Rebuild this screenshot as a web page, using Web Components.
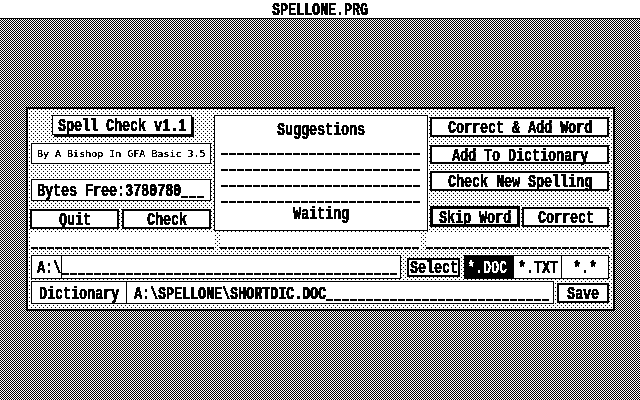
<!DOCTYPE html>
<html>
<head>
<meta charset="utf-8">
<title>SPELLONE.PRG</title>
<style>
html,body{margin:0;padding:0;background:#fff;}
/* makes every glyph 1-bit, like the ST high res screen */
body{width:640px;height:400px;overflow:hidden;filter:brightness(.72) contrast(100);}
</style>
</head>
<body>
<st-desktop title="SPELLONE.PRG">
  <st-window>
    <div class="col-left" slot="left">
      <st-btn kind="shadow" style="width:140px;height:20px;margin-left:22px"><st-text>Spell Check v1.1</st-text></st-btn>
      <st-box style="width:180px;height:21px;margin:8px 0 0 1px"><st-text small>By A Bishop In GFA Basic 3.5</st-text></st-box>
      <st-box style="width:180px;height:22px;margin:15px 0 0 1px"><st-text>Bytes Free:3780780</st-text><st-text blank>___</st-text></st-box>
      <st-row style="margin-top:8px;gap:3px">
        <st-btn style="width:89px;height:20px"><st-text>Quit</st-text></st-btn>
        <st-btn style="width:89px;height:20px"><st-text>Check</st-text></st-btn>
      </st-row>
    </div>
    <st-suggest slot="middle">
      <st-text blank>_________________________</st-text>
      <st-text blank>_________________________</st-text>
      <st-text blank>_________________________</st-text>
      <st-text blank>_________________________</st-text>
    </st-suggest>
    <div class="col-right" slot="right">
      <st-btn style="width:179px;height:20px;margin-top:2px"><st-text>Correct &amp; Add Word</st-text></st-btn>
      <st-btn style="width:179px;height:19px;margin-top:8px"><st-text>Add To Dictionary</st-text></st-btn>
      <st-btn style="width:179px;height:20px;margin-top:7px"><st-text>Check New Spelling</st-text></st-btn>
      <st-row style="margin-top:15px;gap:2px;align-items:center">
        <st-btn kind="default" style="width:90px;height:21px"><st-text>Skip Word</st-text></st-btn>
        <st-btn style="width:87px;height:20px"><st-text>Correct</st-text></st-btn>
      </st-row>
    </div>
    <st-field slot="fields" style="width:184px"><st-text blank>_______________________</st-text></st-field>
    <st-field slot="fields" style="width:200px;margin-left:5px"><st-text blank>_________________________</st-text></st-field>
    <st-field slot="fields" style="width:184px;margin-left:6px"><st-text blank>_______________________</st-text></st-field>

    <st-row slot="path" style="align-items:center">
      <st-box align="left" style="width:370px;height:24px;padding-left:5px"><st-text>A:\</st-text><st-cursor><st-text blank>__________________________________________</st-text></st-cursor></st-box>
      <st-btn style="width:53px;height:19px;margin-left:6px"><st-text>Select</st-text></st-btn>
      <st-row style="margin-left:4px">
        <st-box kind="selected" style="width:50px;height:24px;padding-right:4px"><st-text>*.DOC</st-text></st-box>
        <st-box kind="plain" style="width:47px;height:24px"><st-text>*.TXT</st-text></st-box>
        <st-box style="width:48px;height:24px"><st-text>*.*</st-text></st-box>
      </st-row>
    </st-row>
    <st-row slot="dict" style="align-items:center;margin-top:2px">
      <st-box style="width:96px;height:23px"><st-text>Dictionary</st-text></st-box>
      <st-box align="left" style="width:428px;height:23px;margin-left:-1px;padding-left:7px"><st-text>A:\SPELLONE\SHORTDIC.DOC</st-text><st-text blank>____________________________</st-text></st-box>
      <st-btn style="width:52px;height:20px;margin-left:3px"><st-text>Save</st-text></st-btn>
    </st-row>
  </st-window>
</st-desktop>

<script>
const DOTS = "url(\"data:image/svg+xml,%3Csvg xmlns='http://www.w3.org/2000/svg' width='4' height='4' shape-rendering='crispEdges'%3E%3Crect width='4' height='4' fill='%23fff'/%3E%3Crect x='1' y='0' width='1' height='1'/%3E%3Crect x='3' y='2' width='1' height='1'/%3E%3C/svg%3E\")";

class StDesktop extends HTMLElement{
    connectedCallback(){
        this.attachShadow({mode:"open"}).innerHTML=`
        <style>
        :host{display:block;width:640px;height:400px;background:#fff;color:#000;}
        header{height:18px;box-sizing:border-box;padding-top:1px;display:flex;justify-content:center;}
        main{height:382px;box-sizing:border-box;border-top:1px solid #000;background:repeating-conic-gradient(#000 0 25%,#fff 0 50%) 0 0/2px 2px;padding:88px 0 0 26px;}
        </style>
        <header><st-text>${this.getAttribute("title")}</st-text></header>
        <main><slot></slot></main>`;
        this.removeAttribute("title");
    }
}

class StWindow extends HTMLElement{
    connectedCallback(){
        this.attachShadow({mode:"open"}).innerHTML=`
        <style>
        :host{display:block;width:589px;height:204px;box-sizing:border-box;border:2px solid #000;background:${DOTS};padding:6px 0 0 2px;}
        .top{display:flex;height:116px;}
        .left{width:184px;}
        .right{margin-left:2px;}
        .fields{display:flex;height:16px;margin:2px 0 0 1px;}
        .path{margin:6px 0 0 1px;}
        ::slotted(.col-left),::slotted(.col-right){display:block;}
        </style>
        <div class="top">
            <div class="left"><slot name="left"></slot></div>
            <slot name="middle"></slot>
            <div class="right"><slot name="right"></slot></div>
        </div>
        <div class="fields"><slot name="fields"></slot></div>
        <div class="path"><slot name="path"></slot><slot name="dict"></slot></div>`;
    }
}

class StRow extends HTMLElement{
    connectedCallback(){
        this.attachShadow({mode:"open"}).innerHTML=`<style>:host{display:flex;}</style><slot></slot>`;
    }
}

class StBtn extends HTMLElement{
    connectedCallback(){
        this.attachShadow({mode:"open"}).innerHTML=`
        <style>
        :host{display:flex;align-items:center;justify-content:center;box-sizing:border-box;border:2px solid #000;background:#fff;}
        :host([kind=shadow]){border-width:1px;box-shadow:2px 2px 0 #000;}
        :host([kind=default]){border-width:3px;}
        </style>
        <slot></slot>`;
    }
}

class StBox extends HTMLElement{
    connectedCallback(){
        this.attachShadow({mode:"open"}).innerHTML=`
        <style>
        :host{display:flex;align-items:center;justify-content:center;box-sizing:border-box;border:1px solid #000;background:#fff;flex:none;}
        :host([align=left]){justify-content:flex-start;}
        :host([kind=selected]){background:#000;color:#fff;}
        :host([kind=plain]){border-left:0;border-right:0;}
        </style>
        <slot></slot>`;
    }
}

class StCursor extends HTMLElement{
    connectedCallback(){
        this.attachShadow({mode:"open"}).innerHTML=`
        <style>:host{display:flex;align-items:center;align-self:stretch;border-left:1px solid #000;}</style>
        <slot></slot>`;
    }
}

class StField extends HTMLElement{
    connectedCallback(){
        this.attachShadow({mode:"open"}).innerHTML=`
        <style>:host{display:block;height:16px;background:#fff;flex:none;}</style>
        <slot></slot>`;
    }
}

class StSuggest extends HTMLElement{
    connectedCallback(){
        this.attachShadow({mode:"open"}).innerHTML=`
        <style>
        :host{display:block;width:214px;height:116px;box-sizing:border-box;border:1px solid #000;background:#fff;flex:none;}
        .head{height:23px;padding-top:5px;box-sizing:border-box;display:flex;justify-content:center;}
        .lines{display:flex;flex-direction:column;align-items:center;}
        .foot{margin-top:2px;display:flex;justify-content:center;}
        </style>
        <div class="head"><st-text>Suggestions</st-text></div>
        <div class="lines"><slot></slot></div>
        <div class="foot"><st-text>Waiting</st-text></div>`;
    }
}

// 8x16 cell text. The wider outline font gets squeezed into the ST's narrow cell
class StText extends HTMLElement{
    connectedCallback(){
        const n=this.textContent.length;
        this.attachShadow({mode:"open"}).innerHTML=`
        <style>
        :host{display:block;flex:none;height:16px;width:${n*8}px;line-height:16px;}
        :host([small]){width:${n*6}px;}
        span{display:inline-block;white-space:pre;transform-origin:0 50%;transform:translateY(1px) scaleX(.7018);font:bold 19px/16px "Liberation Mono",monospace;text-shadow:.5px 0 0 currentColor;}
        :host([small]) span{transform:translateY(-2px) scaleX(1.25);font:8px/16px "DejaVu Sans Mono",monospace;text-shadow:none;}
        :host([blank]) span{transform:none;font:bold 12px/16px "Liberation Mono",monospace;letter-spacing:.8px;text-shadow:0 1px 0 currentColor;}
        </style>
        <span><slot></slot></span>`;
    }
}

customElements.define("st-text",StText);
customElements.define("st-row",StRow);
customElements.define("st-btn",StBtn);
customElements.define("st-box",StBox);
customElements.define("st-cursor",StCursor);
customElements.define("st-field",StField);
customElements.define("st-suggest",StSuggest);
customElements.define("st-window",StWindow);
customElements.define("st-desktop",StDesktop);
</script>
</body>
</html>
